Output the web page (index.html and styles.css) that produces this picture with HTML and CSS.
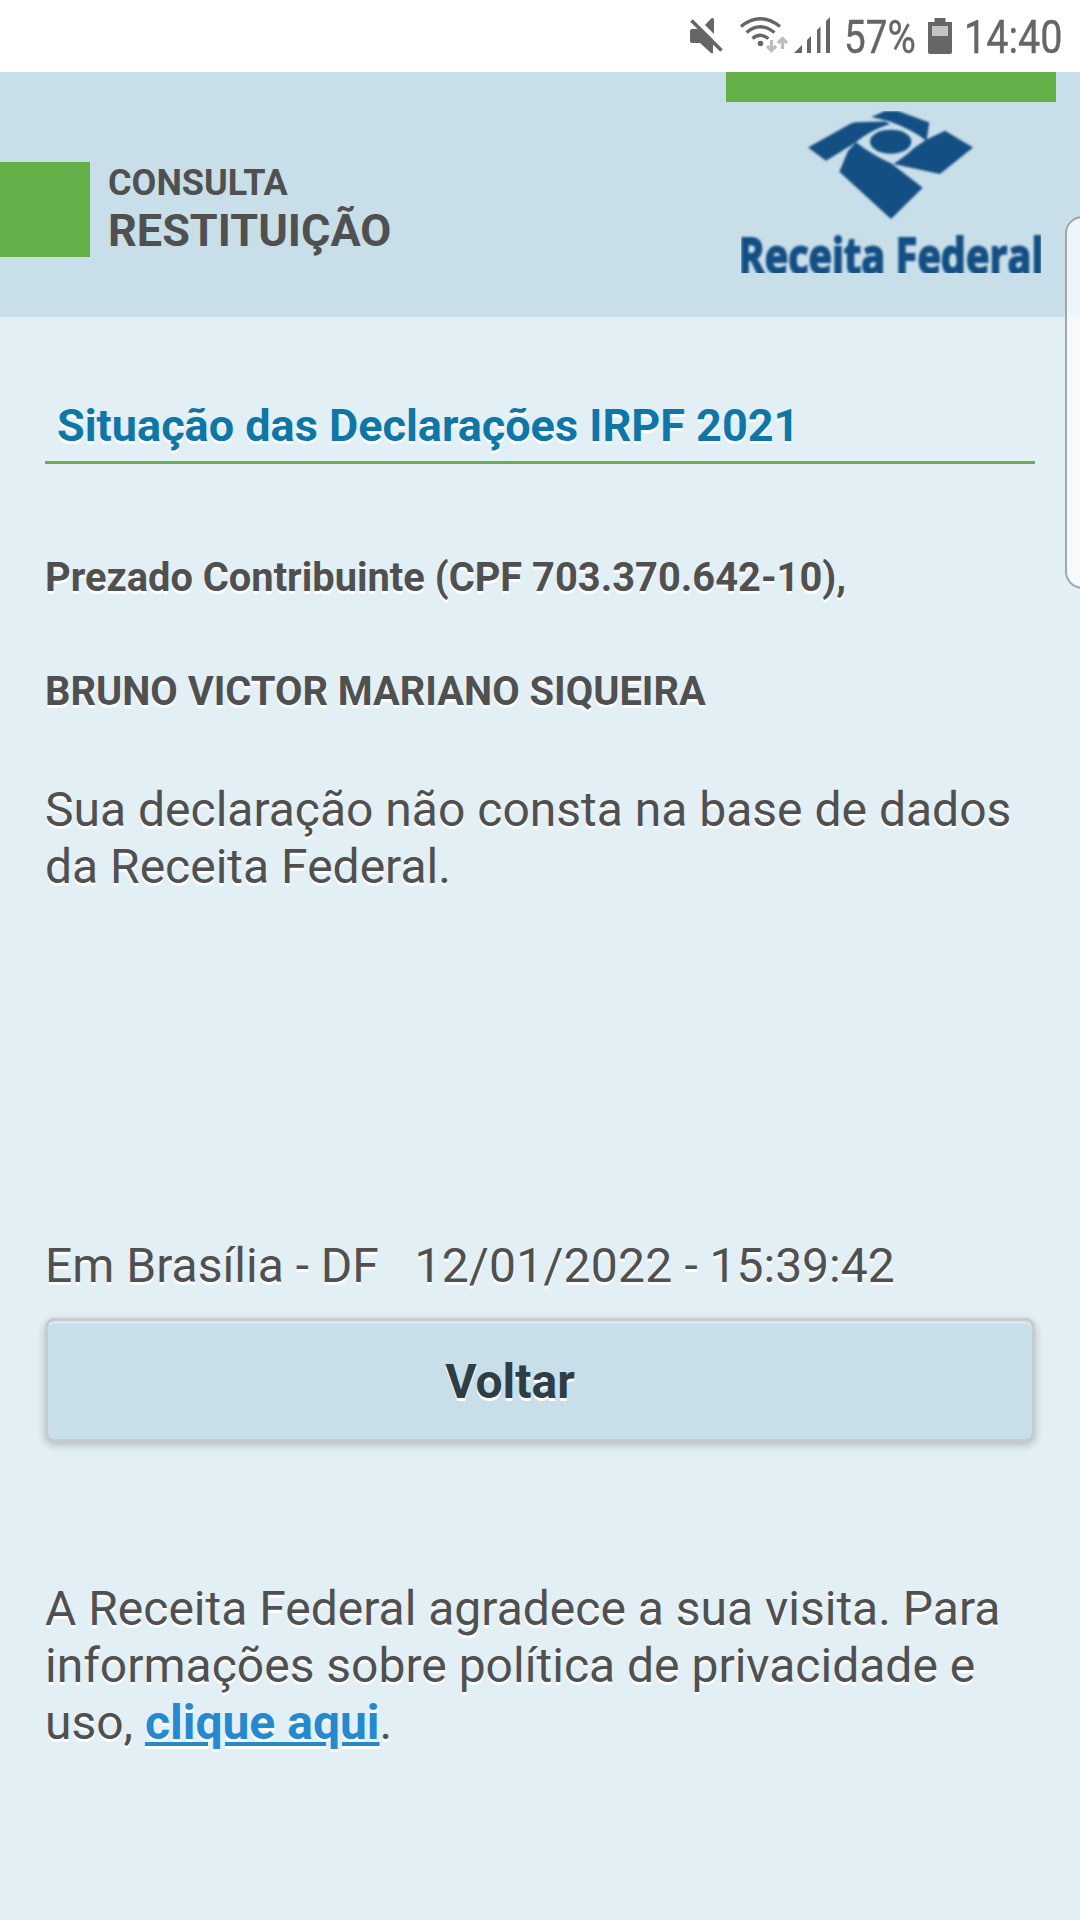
FILE: index.html
```html
<!DOCTYPE html>
<html lang="pt-BR">
<head>
<meta charset="utf-8">
<title>Consulta Restituição</title>
<link rel="stylesheet" href="styles.css">
</head>
<body>
<div class="status">
  <svg class="status-icons" width="160" height="72" viewBox="680 0 160 72">
    <g fill="#666">
      <path d="M690 31Q690 29 692 29H702L713 39.500V52.500Q713 54 711 53L700 43H692Q690 43 690 41Z"/>
      <path d="M705 25L711 18.500Q714 17 714 20V34Z"/>
    </g>
    <path d="M691.500 20.500L721.500 50.500" stroke="#666" stroke-width="3.600"/>
    <g fill="none" stroke="#666" stroke-width="3.300">
      <path d="M741 26.500Q760 11 780 26.500"/>
      <path d="M746.500 32.500Q760 21 774.500 32.500"/>
      <path d="M752.500 38.500Q760 32 768.500 38.500"/>
    </g>
    <circle cx="760.500" cy="43.500" r="2.800" fill="#666"/>
    <g fill="none" stroke="#bdbdbd" stroke-width="3.200">
      <path d="M771.500 40V51M767 46L771.500 50.500L776 46M782.500 49V39M778 43L782.500 38.500L787 43"/>
    </g>
    <path d="M794 53L802 45V53ZM807 53V40L811 36V53ZM817 53V30L820.500 26.500V53ZM826 53V21L830 17V53Z" fill="#666"/>
  </svg>
  <span class="percent">57%</span>
  <svg class="battery" width="24" height="36" viewBox="0 0 24 36">
    <path d="M0 4H6.500V0H17.500V4H24V34Q24 36 22 36H2Q0 36 0 34Z" fill="#666"/>
    <path d="M4 8H20V18H4Z" fill="#c4c4c4"/>
  </svg>
  <span class="clock">14:40</span>
</div>
<header class="header">
  <div class="brand-mark"></div>
  <div class="heading">
    <div class="heading-small">CONSULTA</div>
    <div class="heading-large">RESTITUIÇÃO</div>
  </div>
  <div class="brand">
    <div class="brand-bar"></div>
    <svg class="logo" width="300" height="162" viewBox="741 111 300 162">
      <g class="logo-art">
        <path d="M808 147.500L850 124Q853 122.300 856 122.300L885 121.500L890 124Q868 131 855 143L826 160.700Z"/>
        <path d="M871.500 117L885 111H898L929.300 122.500L926.500 141Q913 130 890 121.500Z"/>
        <ellipse cx="890.700" cy="141.700" rx="20.700" ry="12"/>
        <path d="M893.500 164Q907 155 914 148L926.700 139.500L945 130.700L973 147.500L940 174Z"/>
        <path d="M856 142.300Q872 155 891.500 163.500L922.700 187.700L891 219L839.300 171.700L848 151Z"/>
        <text class="logo-text" x="738.500" y="274" textLength="305" lengthAdjust="spacingAndGlyphs">Receita Federal</text>
      </g>
    </svg>
  </div>
</header>
<main class="content">
  <h1 class="title">Situação das Declarações IRPF 2021</h1>
  <p class="strong">Prezado Contribuinte (CPF 703.370.642-10),</p>
  <p class="strong name">BRUNO VICTOR MARIANO SIQUEIRA</p>
  <p class="text result">Sua declaração não consta na base de dados<br>da Receita Federal.</p>
  <p class="text date">Em Brasília - DF &nbsp; <span class="day">12/01/2022</span> - 15:39:42</p>
  <button class="back" type="button">Voltar</button>
  <p class="text privacy">A Receita Federal agradece a sua visita. Para<br>informações sobre política de privacidade e<br>uso, <a class="link" href="#">clique aqui</a>.</p>
</main>
<div class="edge-handle"></div>
</body>
</html>
```
FILE: styles.css
```css
* { box-sizing: border-box; }
body {
  margin: 0;
  width: 1080px;
  height: 1920px;
  position: relative;
  overflow: hidden;
  background: #e2eff5;
  color: #505050;
  font-family: Roboto, sans-serif;
}
h1, p { margin: 0; }
.status {
  height: 72px;
  background: #fff;
  color: #666;
  display: flex;
  align-items: center;
  padding-left: 680px;
  font-size: 46px;
  line-height: 72px;
  white-space: nowrap;
}
.status-icons { flex: none; }
.percent, .clock {
  flex: none;
  padding-top: 2px;
  transform: scaleX(.86);
  transform-origin: left center;
  -webkit-text-stroke: .4px #666;
}
.percent { width: 83px; margin-left: 4px; margin-right: 1px; transform: scaleX(.84); }
.battery { flex: none; }
.clock { margin-left: 12px; }
.header {
  height: 245px;
  background: #c8dee9;
  display: flex;
}
.brand-mark {
  width: 90px;
  height: 95px;
  margin-top: 90px;
  background: #65af49;
}
.heading { margin: 90px 0 0 18px; font-weight: 700; }
.heading-small { font-size: 36px; line-height: 42px; }
.heading-large { font-size: 45px; line-height: 53px; }
.brand {
  width: 330px;
  margin-left: auto;
  margin-right: 24px;
}
.brand-bar { height: 30px; background: #65af49; }
.logo { display: block; margin: 9px 0 0 15px; overflow: hidden; }
.logo-art { fill: #144f84; filter: blur(.9px); }
.logo-text {
  font: 700 51px "Open Sans", sans-serif;
  stroke: #144f84;
  stroke-width: 1.8px;
}
.content { padding: 82px 45px 0; text-shadow: 0 3px 0 #fff; }
.title {
  height: 65px;
  padding-left: 12px;
  border-bottom: 3px solid #66af50;
  color: #0f76a8;
  font-size: 45px;
  line-height: 54px;
}
.strong { margin-top: 91px; font-size: 39.84px; font-weight: 700; line-height: 46px; }
.name { margin-top: 68px; }
.text { font-size: 48px; line-height: 57px; }
.result { margin-top: 66px; }
.date { margin-top: 342px; }
.day { letter-spacing: .25px; }
.back {
  display: block;
  width: 990px;
  height: 124px;
  margin-top: 24px;
  padding: 2px 60px 0 0;
  border: 3px solid #c8cbce;
  border-radius: 9px;
  background: #c8dee9;
  color: #2f3e46;
  font: 700 48px/57px Roboto, sans-serif;
  text-shadow: 0 3px 0 #fff;
  box-shadow: inset 0 3px 0 rgba(255,255,255,.3), 0 3px 9px rgba(0,0,0,.22);
}
.privacy { margin-top: 138px; }
.link { color: #2489ce; font-weight: 700; }
.edge-handle {
  position: absolute;
  top: 216px;
  right: -20px;
  width: 35px;
  height: 373px;
  border: 2px solid #a2a7ab;
  border-radius: 18px;
  background: rgba(255,255,255,.7);
}
```
